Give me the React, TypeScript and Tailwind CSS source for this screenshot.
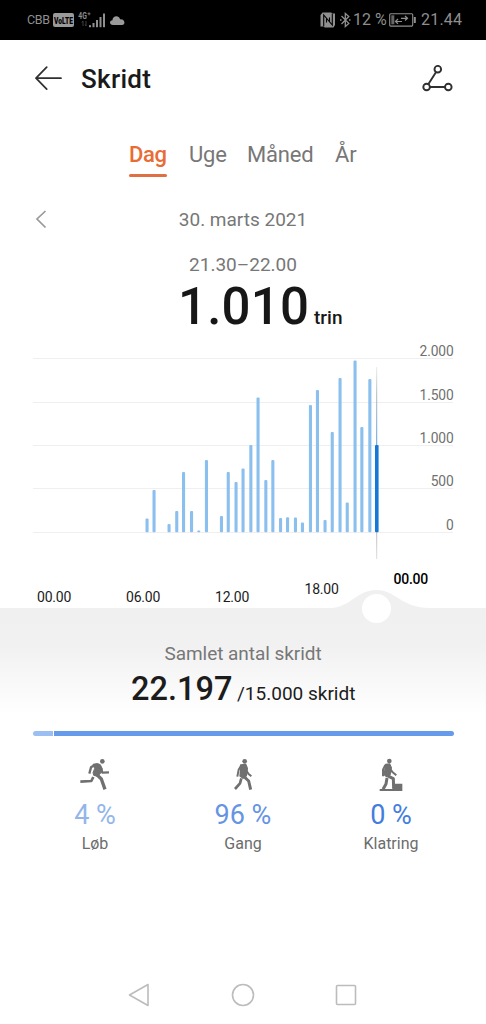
import React from "react";

const bars: [number, number][] = [
  [147, 518.5], [154, 490], [169, 524], [176.7, 511], [183.5, 472], [191.5, 511], [198.7, 530.5],
  [206.4, 460], [221.4, 516], [228.2, 472], [236, 482], [243, 468.5], [250.8, 445], [258, 397.5],
  [265.8, 480], [272.8, 460], [280.5, 518], [287.5, 517.3], [295.4, 517.5], [302.4, 522.5],
  [310.4, 405], [317.4, 390], [325, 520], [332.2, 432], [340, 378], [347.2, 502.5], [355, 360.5],
  [361.8, 427], [369.8, 379],
];

const gridLines: [number, string][] = [
  [358.5, "2.000"], [402.5, "1.500"], [445.5, "1.000"], [488.5, "500"], [532.5, "0"],
];

function StatusBar() {
  return (
    <header className="flex h-[40px] shrink-0 items-center bg-black pl-[27px] pr-[24px] text-[#8f8f8f]">
      <span className="w-[26px] text-[12.5px] leading-none tracking-[-0.3px]">CBB</span>
      <svg className="shrink-0 overflow-visible" width="21" height="14" viewBox="0 0 21 14">
        <rect width="21" height="14" rx="2" fill="#9a9a9a" />
        <text transform="translate(10.5 10.6) scale(.7 1)" textAnchor="middle" fontSize="9.5" fontWeight="900" fontFamily="Roboto, sans-serif" fill="#000">VoLTE</text>
      </svg>
      <svg className="ml-[4px] overflow-visible" width="28" height="18" viewBox="0 0 28 18" fill="#8f8f8f">
        <text transform="translate(0.3 7.5) scale(.8 1)" fontSize="8.5" fontWeight="700" fontFamily="Roboto, sans-serif">4G</text>
        <path d="M9.5 2.8h3M11 1.3v3" stroke="#8f8f8f" strokeWidth="0.8" />
        <path d="M5 10v5M4 11.5 5 10M8 10v5M7 13.5 8 15" stroke="#444" strokeWidth="0.9" fill="none" />
        <rect x="11" y="14.2" width="2" height="2" /><rect x="14.5" y="12" width="2" height="4.2" />
        <rect x="18" y="9" width="2" height="7.2" /><rect x="21.5" y="6" width="2" height="10.2" /><rect x="25" y="2.5" width="2" height="13.7" />
      </svg>
      <svg className="ml-[4px]" width="15" height="9" viewBox="0 0 15 9" fill="#9a9a9a">
        <path d="M3 9C-1 9-.8 4.5 2.4 4.2 2.7-1 9.3-1 10.1 3.4 14.9 2.8 16 9 12 9Z" />
      </svg>
      <div className="ml-auto flex items-center">
        <svg width="16" height="16" viewBox="0 0 16 16" fill="none">
          <path d="M2.5.5H11L13 1.500h2v11.500l-1.500 2.500H5L3 14.500H.5V3Z" fill="#8f8f8f" />
          <path d="M3.700 14.500V3l5.800 6.800V5.500M12.300 1.500V13L6.500 6.200v4.300" stroke="#000" strokeWidth="1.100" />
        </svg>
        <svg className="ml-[4px]" width="11" height="16" viewBox="0 0 11 16" fill="none" stroke="#8f8f8f" strokeWidth="1.3">
          <path d="m1.5 4 7.3 7.4L5.3 14.5V1.5l3.5 3L1.5 12" /><path d="M0 8h1.5M9 8h1.5" strokeWidth="1.5" />
        </svg>
        <span className="ml-[1px] w-[36px] whitespace-nowrap pl-px text-[16px] leading-none">12 %</span>
        <svg className="ml-[1px]" width="28" height="14" viewBox="0 0 28 14" fill="none" stroke="#8f8f8f">
          <rect x=".7" y=".7" width="23" height="12.4" rx="1" strokeWidth="1.1" />
          <rect x="2.3" y="2.3" width="3" height="9" fill="#666" stroke="none" />
          <path d="M25.8 4v6" strokeWidth="2" />
          <path d="M6 8.5h7M9 6 6.5 8.5 9 10.7M12 5.3h6.5M16 3l2.5 2.3L16 7.5" strokeWidth="1.2" />
        </svg>
        <span className="ml-[4px] w-[41px] whitespace-nowrap text-[16px] leading-none tracking-[0.2px]">21.44</span>
      </div>
    </header>
  );
}

function TitleBar() {
  return (
    <div className="flex h-[78px] shrink-0 items-center pl-[34px] pr-[33px]">
      <svg width="28" height="26" viewBox="0 0 28 26" fill="none" stroke="#303030" strokeWidth="1.7" strokeLinecap="round" strokeLinejoin="round">
        <path d="M27 12.2H2M12.7 1.2 2 12.2l10.7 11" />
      </svg>
      <h1 className="ml-[19px] text-[26px] font-medium leading-none tracking-[0.3px] text-[#1a1a1a]">Skridt</h1>
      <svg className="ml-auto" width="31" height="28" viewBox="0 0 31 28" fill="none" stroke="#303030" strokeWidth="1.9">
        <circle cx="15.8" cy="4.2" r="3.3" /><circle cx="4.6" cy="22" r="3.3" /><circle cx="26.3" cy="22" r="3.3" />
        <path d="m14.1 7-7.8 12.2M7.9 22H23" />
      </svg>
    </div>
  );
}

function Tabs() {
  return (
    <nav className="flex h-[58px] shrink-0 pl-[129px] pt-[24px] text-[22px] leading-[26px] text-[#777]">
      <span className="flex w-[38px] flex-col whitespace-nowrap font-medium tracking-[-0.3px] text-[#e96b35]">
        Dag
        <span className="mt-[6px] h-[3px] shrink-0 rounded-full bg-[#df7043]" />
      </span>
      <span className="ml-[22px] w-[37px] tracking-[-0.2px]">Uge</span>
      <span className="ml-[21px] w-[67px] whitespace-nowrap tracking-[-0.2px]">Måned</span>
      <span className="ml-[21px]">År</span>
    </nav>
  );
}

function Chart() {
  return (
    <svg className="block shrink-0" width="486" height="270" viewBox="0 340 486 270" fontFamily="Roboto, sans-serif">
      <defs>
        <linearGradient id="marker" x1="0" y1="365" x2="0" y2="445" gradientUnits="userSpaceOnUse">
          <stop stopColor="#c8cccf" stopOpacity="0.35" /><stop offset=".35" stopColor="#b5bbc0" /><stop offset="1" stopColor="#5b9fda" />
        </linearGradient>
        <linearGradient id="tail" x1="0" y1="532" x2="0" y2="559" gradientUnits="userSpaceOnUse">
          <stop stopColor="#bbb" /><stop offset="1" stopColor="#ddd" />
        </linearGradient>
      </defs>
      {gridLines.map(([y, label]) => (
        <g key={label}>
          <path d={`M33 ${y}H453`} stroke="#efefef" />
          <text x="453.5" y={y - 2.3} textAnchor="end" fontSize="13.8" letterSpacing="-0.15" fill="#707070">{label}</text>
        </g>
      ))}
      {bars.map(([x, y]) => (
        <rect key={x} x={x - 1.5} y={y} width="3.1" height={532.2 - y} rx="1" fill="#8bc0ee" />
      ))}
      <rect x="376.2" y="367" width="1" height="80" fill="url(#marker)" />
      <rect x="376.2" y="532" width="1" height="27" fill="url(#tail)" />
      <rect x="375" y="445" width="3.6" height="87.3" rx="1" fill="#1479d5" />
      <path d="M0 608H332C352 606 357 590 376.5 590S401 608 430 608H486V610H0Z" fill="#f0f0f0" />
      <g fontSize="14" letterSpacing="-0.2" fill="#1c1c1c">
        <text x="37" y="602">00.00</text>
        <text x="126" y="602">06.00</text>
        <text x="215" y="602">12.00</text>
        <text x="304.5" y="594">18.00</text>
        <text x="393.5" y="583.5" fontWeight="500" letterSpacing="-0.25" fill="#000">00.00</text>
      </g>
    </svg>
  );
}

function RunIcon() {
  return (
    <svg width="32" height="34" viewBox="59 37 96 102" fill="none" stroke="#707070" strokeWidth="6" strokeLinejoin="round">
      <circle cx="129" cy="47" r="7" fill="#707070" stroke="none" />
      <path d="M101 56q14-5 22 1l6 13-3 10-11 12-12-3-2-8 5-12Z" fill="#707070" strokeWidth="3" />
      <path d="m106 58-11 7-5 19M124 66l5 15 20-1" strokeWidth="7" />
      <path d="m102 94-6 12-33 2" strokeWidth="8" />
      <path d="m108 83 18 17 11 31" strokeWidth="10" />
    </svg>
  );
}

function WalkIcon() {
  return (
    <svg width="32" height="34" viewBox="502 37 96 102" fill="none" stroke="#707070" strokeWidth="6" strokeLinejoin="round">
      <circle cx="555" cy="47" r="7" fill="#707070" stroke="none" />
      <path d="m543 58 15-2 5 12-3 22-10 8-9-7 2-20Z" fill="#707070" strokeWidth="4" />
      <path d="m544 60-7 12-4 21M560 74l6 10 9 8" strokeWidth="6" />
      <path d="m545 98-4 15-15 17" strokeWidth="8" />
      <path d="m549 89 18 17 6 26" strokeWidth="9" />
    </svg>
  );
}

function ClimbIcon() {
  return (
    <svg width="32" height="34" viewBox="315 110 96 102" fill="none" stroke="#707070" strokeWidth="6" strokeLinejoin="round">
      <circle cx="358" cy="119" r="7" fill="#707070" stroke="none" />
      <path d="m347 129 12-1 5 11-4 22-10 5-7-6 2-18Z" fill="#707070" strokeWidth="4" />
      <path d="m346 131-7 14v20M361 143l7 10 11 9" strokeWidth="6" />
      <path d="m351 170-3 18-9 16" strokeWidth="9" />
      <path d="m350 162 20 10 1 30" strokeWidth="9" />
      <path d="M329 203h39V187h29v22h-68Z" fill="#707070" stroke="none" />
    </svg>
  );
}

function Stat({ icon, value, label, className }: { icon: React.ReactNode; value: string; label: string; className: string }) {
  return (
    <div className="flex w-[148px] flex-col items-center">
      {icon}
      <span className={`mt-[7px] text-[27px] leading-[32px] ${className}`}>{value}</span>
      <span className="mt-[3px] text-[16px] leading-[20px] text-[#6c6c6c]">{label}</span>
    </div>
  );
}

export default function App() {
  return (
    <main className="flex h-[1024px] w-[486px] flex-col overflow-hidden bg-white font-[Roboto,sans-serif]">
      <StatusBar />
      <TitleBar />
      <Tabs />
      <section className="flex h-[164px] shrink-0 flex-col">
        <div className="grid h-[77px] shrink-0 grid-cols-[47px_1fr_47px] items-center pt-[11px]">
          <svg className="justify-self-end" width="12" height="20" viewBox="0 0 12 20" fill="none" stroke="#999" strokeWidth="1.7">
            <path d="M10.5 1 2 9l8.5 8.5" />
          </svg>
          <span className="text-center text-[19px] leading-[24px] text-[#777]">30. marts 2021</span>
        </div>
        <div className="shrink-0 text-center text-[19px] leading-[24px] text-[#777]">21.30–22.00</div>
        <div className="flex shrink-0 items-baseline whitespace-nowrap pl-[178px] pt-[1px] text-[#171717]">
          <span className="w-[130px] text-[51px] font-medium leading-[58px] tracking-[0.2px]">1.010</span>
          <span className="ml-[6px] text-[19px] font-medium leading-none">trin</span>
        </div>
      </section>
      <div className="relative">
        <Chart />
        <div className="absolute left-[362px] top-[254px] z-10 size-[29px] rounded-full bg-white" />
      </div>
      <section className="flex h-[361px] shrink-0 flex-col items-center bg-[linear-gradient(#f0f0f0_0,#f1f1f1_35px,#fff_105px)]">
        <p className="mt-[32px] text-[19px] leading-[24px] tracking-[-0.05px] text-[#777]">Samlet antal skridt</p>
        <div className="flex h-[49px] w-full items-baseline whitespace-nowrap pl-[131px] pt-[2px] text-[#1c1c1c]">
          <span className="w-[101px] text-[32.5px] font-medium leading-[42px]">22.197</span>
          <span className="ml-[5px] text-[19px] leading-none">/15.000 skridt</span>
        </div>
        <div className="mt-[16px] flex h-[5px] w-[421px] shrink-0 gap-[1px] overflow-hidden rounded-full">
          <div className="w-[20px] bg-[#9bbff2]" />
          <div className="flex-1 bg-[#659bea]" />
        </div>
        <div className="mt-[22px] flex w-[444px]">
          <Stat icon={<RunIcon />} value="4 %" label="Løb" className="text-[#93b6ea]" />
          <Stat icon={<WalkIcon />} value="96 %" label="Gang" className="text-[#6594e4]" />
          <Stat icon={<ClimbIcon />} value="0 %" label="Klatring" className="text-[#427ddd]" />
        </div>
      </section>
      <footer className="flex flex-1 items-center justify-between pb-[6px] pl-[128px] pr-[129px]">
        <svg width="22" height="24" viewBox="0 0 22 24" fill="none" stroke="#bcbcbc" strokeWidth="1.6" strokeLinejoin="round"><path d="M20 1.5v21L1.5 12Z" /></svg>
        <svg width="24" height="24" viewBox="0 0 24 24" fill="none" stroke="#bcbcbc" strokeWidth="1.6"><circle cx="12" cy="12" r="10.5" /></svg>
        <svg width="22" height="22" viewBox="0 0 22 22" fill="none" stroke="#bcbcbc" strokeWidth="1.6"><rect x="1.5" y="1.5" width="19" height="19" rx="1" /></svg>
      </footer>
    </main>
  );
}
